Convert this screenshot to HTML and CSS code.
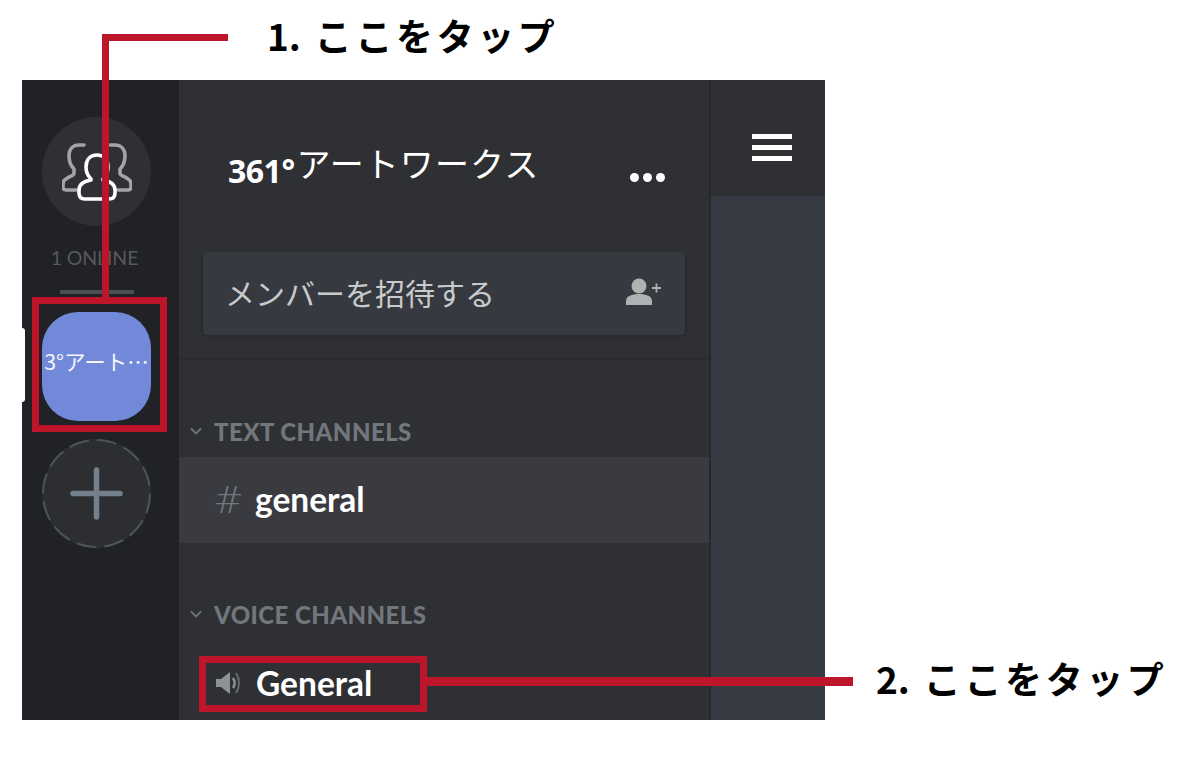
FILE: index.html
```html
<!DOCTYPE html>
<html lang="ja">
<head>
<meta charset="utf-8">
<title>Discord</title>
<link rel="stylesheet" href="styles.css">
</head>
<body>
<div class="stage">
  <div class="app">
    <nav class="rail">
      <div class="home">
        <svg class="home-icon" viewBox="0 0 70 58" width="70" height="58" fill="none" stroke-linecap="round" stroke-linejoin="round">
          <path stroke="#a3a4a6" stroke-width="3.600" d="M22 2h-5c-6 0-10 4-10 11 0 6 2 10 5 13v4c0 2-2 3-5 4l-3 2c-2 1-3 3-3 5v3c0 2 1 3 3 3h10"/>
          <path stroke="#a3a4a6" stroke-width="3.600" d="M48 2h5c6 0 10 4 10 11 0 6-2 10-5 13v4c0 2 2 3 5 4l3 2c2 1 3 3 3 5v3c0 2-1 3-3 3h-10"/>
          <path stroke="#ffffff" stroke-width="3.600" d="M35 12c-7 0-11 5-11 12 0 5 2 9 5 12v1c-6 1-12 3-12 10v3c0 4 2 6 6 6h24c4 0 6-2 6-6v-3c0-7-6-9-12-10v-1c3-3 5-7 5-12 0-7-4-12-11-12z"/>
        </svg>
      </div>
      <div class="online">1 ONLINE</div>
      <div class="rail-sep"></div>
      <div class="server-wrap">
        <span class="pill"></span>
        <div class="server">3°アート…</div>
      </div>
      <div class="add">
        <svg viewBox="0 0 109 109" width="109" height="109" fill="none">
          <circle cx="54.500" cy="54.500" r="53.500" stroke="#4f545c" stroke-width="2" stroke-dasharray="20 8"/>
          <path d="M31 54.500h47M54.500 31v47" stroke="#747f8d" stroke-width="5.500" stroke-linecap="round"/>
        </svg>
      </div>
    </nav>
    <section class="panel">
      <header class="panel-head">
        <h1 class="guild"><b>361°</b>アートワークス</h1>
        <div class="dots"><i></i><i></i><i></i></div>
      </header>
      <div class="invite-wrap">
        <div class="invite">
          <span>メンバーを招待する</span>
          <svg viewBox="0 0 36 28" width="36" height="28" fill="#b0b1b3">
            <circle cx="13" cy="8" r="7.500"/>
            <path d="M0 27v-4c0-5 6-7 13-7s13 2 13 7v4z"/>
            <path d="M26 10h9M30.500 5.500v9" stroke="#b0b1b3" stroke-width="1.800" fill="none"/>
          </svg>
        </div>
      </div>
      <div class="channels">
        <div class="cat cat-text">
          <svg class="chev" viewBox="0 0 12 8" width="12" height="8" fill="none"><path d="M1 1.500l5 5 5-5" stroke="#6f747b" stroke-width="1.800"/></svg>
          TEXT CHANNELS
        </div>
        <div class="chan active">
          <span class="hash">#</span>
          <span class="chan-name">general</span>
        </div>
        <div class="cat cat-voice">
          <svg class="chev" viewBox="0 0 12 8" width="12" height="8" fill="none"><path d="M1 1.500l5 5 5-5" stroke="#6f747b" stroke-width="1.800"/></svg>
          VOICE CHANNELS
        </div>
        <div class="chan voice">
          <svg class="speaker" viewBox="0 0 28 24" width="28" height="24" fill="none">
            <path d="M1 8h5l9-7v22l-9-7H1z" fill="#8e9297"/>
            <path d="M18 7c2 3 2 7 0 10" stroke="#8e9297" stroke-width="2.400"/>
            <path d="M21 2c4 6 4 14 0 20" stroke="#66696f" stroke-width="2"/>
          </svg>
          <span class="chan-name">General</span>
        </div>
      </div>
    </section>
    <aside class="side">
      <div class="side-head">
        <div class="burger"><i></i><i></i><i></i></div>
      </div>
      <div class="side-body"></div>
    </aside>
  </div>
  <div class="note note-one"><span class="num">1.</span> ここをタップ</div>
  <div class="note note-two"><span class="num">2.</span> ここをタップ</div>
  <div class="mark line-v"></div>
  <div class="mark line-h1"></div>
  <div class="mark box-one"></div>
  <div class="mark box-two"></div>
  <div class="mark line-h2"></div>
</div>
</body>
</html>
```
FILE: styles.css
```css
* { box-sizing: border-box; }
html, body { margin: 0; padding: 0; background: #fff; }
body { font-family: "Noto Sans CJK JP", "Noto Sans", sans-serif; overflow: hidden; }
.stage { position: relative; width: 1200px; height: 770px; padding: 80px 375px 50px 22px; }
.app { display: flex; width: 803px; height: 640px; overflow: hidden; background: #2f3033; }

.rail { width: 157px; flex: none; background: #202225; display: flex; flex-direction: column; align-items: center; padding: 37px 8px 0 0; }
.home { width: 109px; height: 109px; border-radius: 50%; background: #2f3033; display: flex; align-items: center; justify-content: center; }
.online { margin: 20px 4px 0 0; height: 24px; line-height: 24px; font-family: "Lato", sans-serif; font-size: 19.500px; letter-spacing: -0.100px; color: #58595d; white-space: nowrap; }
.rail-sep { width: 74px; height: 4px; margin-top: 20px; background: #4b4f54; }
.server-wrap { margin-top: 18px; }
.server { width: 109px; height: 109px; padding-bottom: 12px; border-radius: 36px; background: #7289da; color: #f4f6fc; font-size: 21.500px; font-weight: 400; display: flex; align-items: center; justify-content: center; white-space: nowrap; overflow: hidden; }
.pill { position: absolute; left: 22px; top: 328px; width: 3px; height: 74px; background: #fff; border-radius: 0 4px 4px 0; }
.add { margin-top: 18px; width: 109px; height: 109px; border-radius: 50%; background: #2c2e31; }
.add svg { display: block; }

.panel { width: 530px; flex: none; background: #2f3033; display: flex; flex-direction: column; }
.panel-head { height: 172px; display: flex; align-items: flex-start; justify-content: space-between; padding: 60px 44px 0 49px; }
.guild { margin: 0; font-size: 34px; font-weight: 400; letter-spacing: 1.100px; color: #fff; line-height: 46px; white-space: nowrap; }
.guild b { font-family: "Open Sans", sans-serif; font-weight: 700; font-size: 32px; letter-spacing: -0.500px; vertical-align: -6px; margin-right: 2px; }
.dots { display: flex; gap: 4px; padding-top: 33px; }
.dots i { width: 9px; height: 9px; border-radius: 50%; background: #fff; }
.invite-wrap { padding: 0 24px 0 24px; height: 108px; border-bottom: 2px solid #292b2f; }
.invite { height: 83px; padding: 0 23px 3px 22px; background: #36393f; border-radius: 4px; display: flex; align-items: center; justify-content: space-between; color: #c9cacc; font-size: 30px; font-weight: 400; box-shadow: 0 1px 4px rgba(0,0,0,.2); }
.channels { display: flex; flex-direction: column; }
.cat { display: flex; align-items: center; gap: 12px; padding-left: 11px; font-family: "Lato", sans-serif; font-weight: 900; font-size: 24px; letter-spacing: 0.450px; color: #72767d; height: 30px; }
.cat-text { margin-top: 56px; }
.cat-voice { margin-top: 56px; }
.chan { display: flex; align-items: center; }
.active { height: 86px; margin-top: 11px; padding: 0 0 2px 34px; background: #393b41; }
.voice { height: 50px; margin-top: 29px; padding: 0 0 1px 36px; }
.hash { font-family: "DejaVu Sans", sans-serif; font-size: 37px; font-weight: 200; color: #72767d; width: 42px; margin-top: 3px; }
.chan-name { font-family: "Lato", sans-serif; font-weight: 700; font-size: 33.500px; color: #fff; }
.speaker { margin-right: 13px; }

.side { flex: 1; display: flex; flex-direction: column; border-left: 2px solid #26282b; }
.side-head { height: 116px; background: #2f3033; padding: 54px 0 0 41px; }
.burger { width: 40px; display: flex; flex-direction: column; gap: 6px; }
.burger i { height: 5px; background: #fff; }
.side-body { flex: 1; background: #363a42; }

.note { position: absolute; font-weight: 700; font-size: 37px; line-height: 50px; color: #000; letter-spacing: 3.600px; white-space: nowrap; }
.num { letter-spacing: 0; margin-right: 2px; }
.note-one { left: 267px; top: 10px; }
.note-two { left: 876px; top: 653px; }
.mark { position: absolute; }
.line-v { left: 102px; top: 34px; width: 7px; height: 264px; background: #bd162b; }
.line-h1 { left: 102px; top: 34px; width: 126px; height: 7px; background: #bd162b; }
.box-one { left: 32px; top: 297px; width: 135px; height: 135px; border: 7px solid #bd162b; }
.box-two { left: 199px; top: 656px; width: 228px; height: 56px; border: 7px solid #bd162b; }
.line-h2 { left: 427px; top: 677px; width: 426px; height: 9px; background: #bd162b; }
```
